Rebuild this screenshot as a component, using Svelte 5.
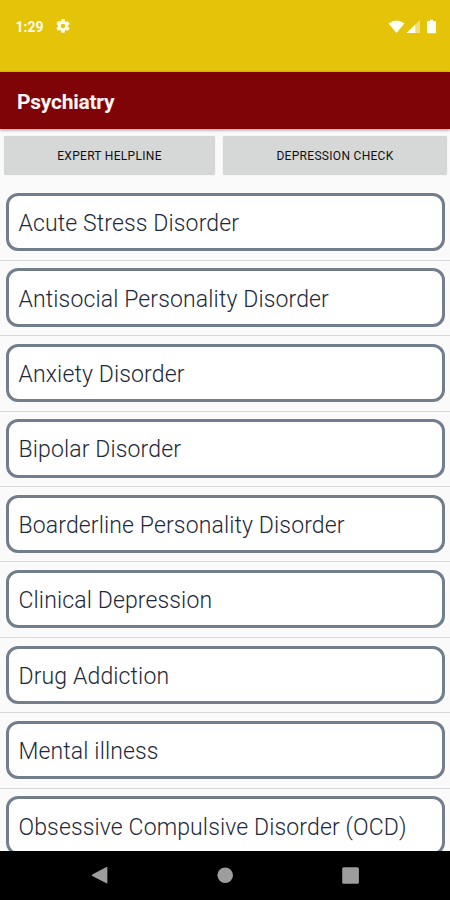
<script>
  const conditions = [
    'Acute Stress Disorder',
    'Antisocial Personality Disorder',
    'Anxiety Disorder',
    'Bipolar Disorder',
    'Boarderline Personality Disorder',
    'Clinical Depression',
    'Drug Addiction',
    'Mental illness',
    'Obsessive Compulsive Disorder (OCD)'
  ];
</script>

<div class="screen">
  <div class="status">
    <span class="time">1:29</span>
    <svg class="gear" width="14" height="14" viewBox="2 2 20 20" aria-hidden="true">
      <path fill="#fffbe8" fill-rule="evenodd" d="M19.14 12.94a7 7 0 0 0 0-1.88l2.03-1.58a.5.5 0 0 0 .12-.61l-1.92-3.32a.5.5 0 0 0-.59-.22l-2.39.96a7 7 0 0 0-1.62-.94l-.36-2.54A.5.5 0 0 0 13.93 2h-3.86a.5.5 0 0 0-.47.41l-.36 2.54a7 7 0 0 0-1.63.94l-2.39-.96a.5.5 0 0 0-.59.22L2.74 8.87a.5.5 0 0 0 .12.61l2.03 1.58a7 7 0 0 0 0 1.88l-2.03 1.58a.5.5 0 0 0-.12.61l1.92 3.32c.12.22.37.29.59.22l2.39-.96c.5.38 1.03.7 1.62.94l.36 2.54c.05.24.24.41.48.41h3.84c.24 0 .44-.17.47-.41l.36-2.54a7 7 0 0 0 1.62-.94l2.39.96c.22.08.47 0 .59-.22l1.92-3.32a.5.5 0 0 0-.12-.61zM12 15.2a3.2 3.2 0 1 1 0-6.4 3.2 3.2 0 0 1 0 6.4z" />
    </svg>
    <svg class="signals" width="50" height="16" viewBox="0 0 50 16" aria-hidden="true">
      <path fill="#fffef5" d="M.5 4.4Q8.5-1.6 16.5 4.4L8.5 14z" />
      <path fill="#fff" opacity=".45" d="M32 1v13H18.5z" />
      <path fill="#fffef5" d="M27.3 5.5V14H18.5z" />
      <path fill="#fffef5" d="M42 .8h3v1.3h2.2q.8 0 .8.8v10.5q0 .8-.8.8h-7.4q-.8 0-.8-.8V2.900q0-.8.8-.8H42z" />
    </svg>
  </div>
  <header><h1>Psychiatry</h1></header>
  <main>
    <div class="actions">
      <button class="expert">EXPERT HELPLINE</button>
      <button class="check">DEPRESSION CHECK</button>
    </div>
    <ul>
      {#each conditions as name}
        <li><div class="card"><span>{name}</span></div></li>
      {/each}
    </ul>
  </main>
  <nav>
    <svg width="450" height="49" viewBox="0 0 450 49" fill="#9d9d9d" aria-hidden="true">
      <path d="M92.3 23.6 106.4 16q1-.4 1 .7v15q0 1.1-1 .6L92.3 25q-.9-.7 0-1.4z" />
      <circle cx="225.2" cy="24.3" r="7.8" />
      <rect x="342.2" y="16.3" width="16.7" height="16.5" rx="1.5" />
    </svg>
  </nav>
</div>

<style>
  .screen {
    width: 450px;
    height: 900px;
    display: flex;
    flex-direction: column;
    overflow: hidden;
    background: #fafafa;
    font-family: Roboto, sans-serif;
  }
  .status {
    height: 72px;
    flex: none;
    box-sizing: border-box;
    padding: 19px 12.5px 0 15.5px;
    display: flex;
    align-items: flex-start;
    background: #e4c309;
  }
  .time {
    color: #fffbe8;
    font-size: 14px;
    font-weight: 700;
    line-height: 16px;
  }
  .gear { margin: 0 0 0 12px; }
  .signals { margin-left: auto; }
  header {
    height: 57px;
    flex: none;
    display: flex;
    align-items: center;
    padding-left: 17px;
    background: #7f0408;
    box-shadow: 0 1px 3px #0006;
    z-index: 1;
  }
  h1 {
    margin: 2px 0 0;
    color: #fff5f3;
    font-size: 21px;
    line-height: 26px;
    font-weight: 700;
    letter-spacing: -0.25px;
  }
  main {
    flex: 1;
    min-height: 0;
    overflow: hidden;
  }
  .actions {
    display: flex;
    gap: 8px;
    padding: 7px 3px 0 4px;
    height: 49.3px;
  }
  button {
    height: 39px;
    border: 0;
    border-radius: 2px;
    padding: 1px 0 0;
    background: #d6d8d7;
    box-shadow: 0 0 1px #0003;
    color: #111;
    font: 400 12px/14px Roboto, sans-serif;
    letter-spacing: 0.3px;
  }
  .expert { width: 211px; }
  .check { width: 224px; }
  ul {
    margin: 0;
    padding: 0;
    list-style: none;
  }
  li {
    height: 75.45px;
    box-sizing: border-box;
    padding: 7.7px 5px 0 6px;
    border-bottom: 1px solid #d9d9d9;
  }
  .card {
    height: 58.3px;
    box-sizing: border-box;
    display: flex;
    align-items: center;
    padding: 4px 0 0 9.5px;
    border: 3px solid #727e8c;
    border-radius: 12px;
    background: #fff;
    color: #1d293b;
    font-size: 23px;
    font-weight: 300;
    line-height: 28px;
    letter-spacing: 0.13px;
    white-space: nowrap;
  }
  nav {
    height: 49px;
    flex: none;
    background: #000;
  }
  nav svg { display: block; }
</style>
